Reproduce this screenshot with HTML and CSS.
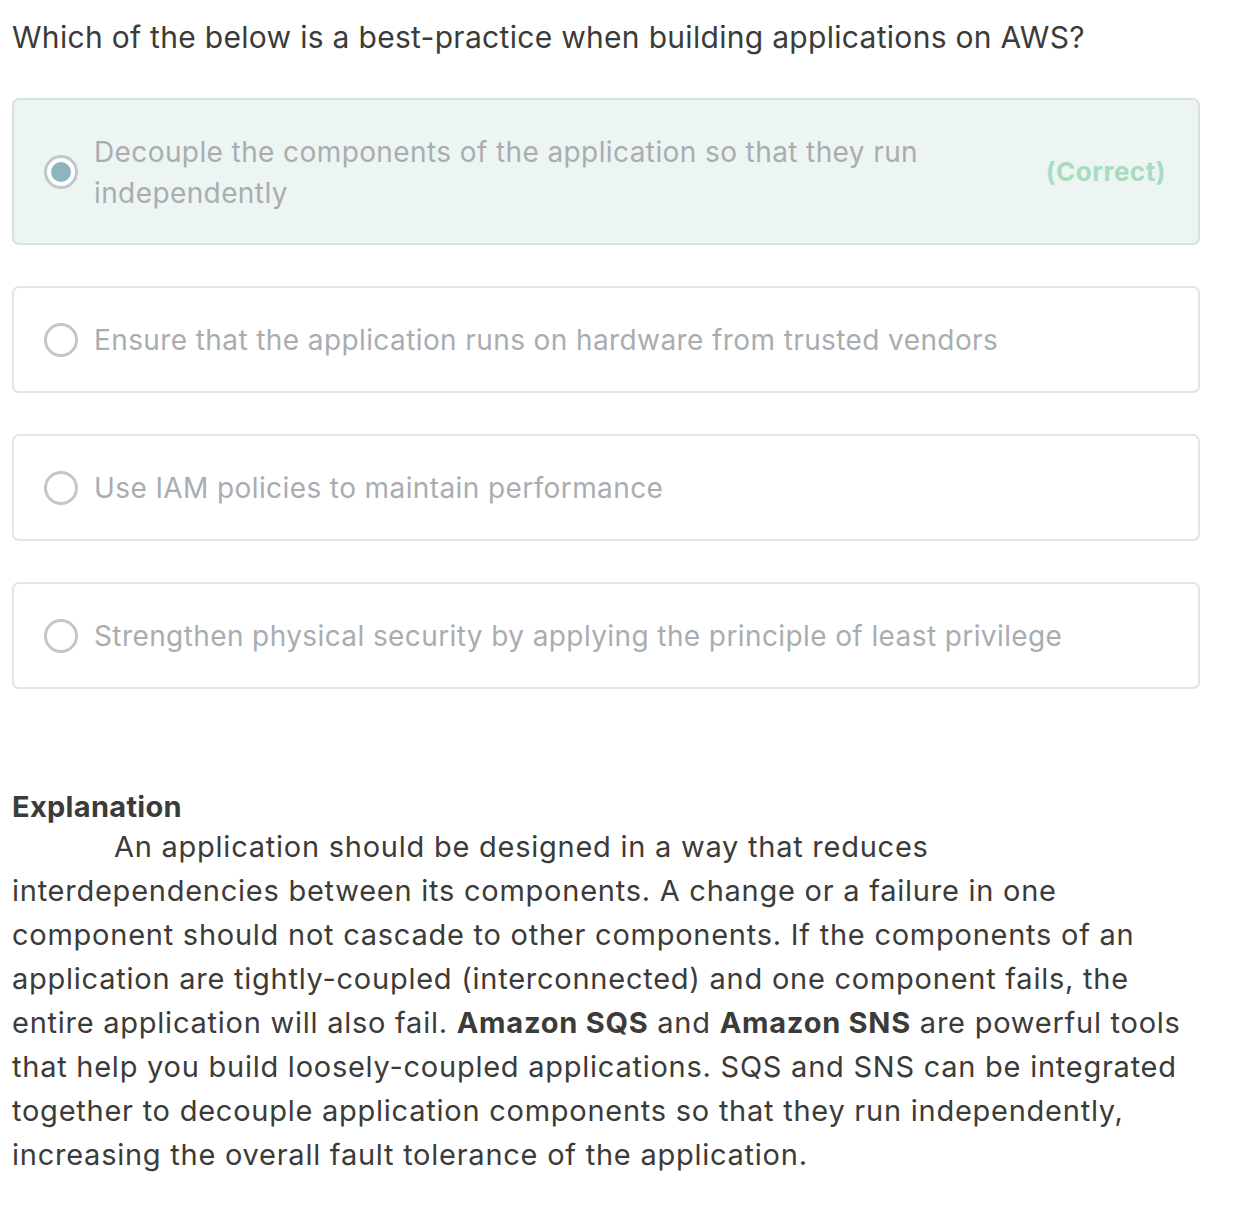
FILE: index.html
```html
<!DOCTYPE html>
<html>
<head>
<meta charset="utf-8">
<link rel="stylesheet" href="styles.css">
</head>
<body>
<div class="page">
  <div class="question">Which of the below is a best-practice when building applications on AWS?</div>
  <div class="options">
    <div class="option correct">
      <span class="radio checked"></span>
      <span class="label">Decouple the components of the application so that they run independently</span>
      <span class="tag">(Correct)</span>
    </div>
    <div class="option">
      <span class="radio"></span>
      <span class="label">Ensure that the application runs on hardware from trusted vendors</span>
    </div>
    <div class="option">
      <span class="radio"></span>
      <span class="label">Use IAM policies to maintain performance</span>
    </div>
    <div class="option">
      <span class="radio"></span>
      <span class="label">Strengthen physical security by applying the principle of least privilege</span>
    </div>
  </div>
  <div class="explanation">
    <div class="exp-title">Explanation</div>
    <p class="exp-body">An application should be designed in a way that reduces interdependencies between its components. A change or a failure in one component should not cascade to other components. If the components of an application are <span class="nb">tightly-coupled</span> (interconnected) and one component fails, the entire application will also fail. <b>Amazon SQS</b> and <b>Amazon SNS</b> are powerful tools that help you build <span class="nb">loosely-coupled</span> applications. SQS and SNS can be integrated together to decouple application components so that they run independently, increasing the overall fault tolerance of the application.</p>
  </div>
</div>
</body>
</html>
```

FILE: styles.css
```css
html, body {
  margin: 0;
  padding: 0;
  background: #ffffff;
}
body {
  font-family: Inter, "Noto Sans", sans-serif;
  color: #3b3b39;
}
.page {
  width: 1188px;
  padding: 16px 0 0 12px;
}
.question {
  font-size: 30px;
  line-height: 42px;
  letter-spacing: 0.3px;
  color: #3b3b39;
}
.options {
  display: flex;
  flex-direction: column;
  gap: 41px;
  margin-top: 40px;
}
.option {
  display: flex;
  align-items: center;
  border: 2px solid #e3e4e4;
  border-radius: 7px;
  box-sizing: border-box;
  min-height: 107px;
  padding: 20px 32px 20px 30px;
  background: #fff;
}
.option.correct {
  background: #ecf5f1;
  border-color: #d6e1dc;
  min-height: 147px;
}
.radio {
  flex: none;
  width: 34px;
  height: 34px;
  box-sizing: border-box;
  border: 3px solid #c3c7cb;
  border-radius: 50%;
  margin-right: 16px;
  position: relative;
}
.radio.checked {
  background: #fff;
}
.radio.checked::after {
  content: "";
  position: absolute;
  left: 4px;
  top: 4px;
  width: 20px;
  height: 20px;
  border-radius: 50%;
  background: #8db4bf;
}
.label {
  flex: 1;
  font-size: 28px;
  line-height: 41px;
  letter-spacing: 0.4px;
  color: #a9adb1;
  padding-right: 60px;
  margin-top: 2px;
}
.tag {
  flex: none;
  font-size: 26px;
  font-weight: 700;
  letter-spacing: 0.5px;
  color: #a8dcc1;
}
.explanation {
  margin-top: 100px;
}
.exp-title {
  font-size: 29px;
  font-weight: 700;
  line-height: 36px;
  letter-spacing: 0.3px;
  color: #3b3b39;
}
.exp-body {
  margin: 0;
  font-size: 29px;
  line-height: 44px;
  letter-spacing: 0.75px;
  text-indent: 102px;
  color: #3b3b39;
}
.exp-body b {
  font-weight: 700;
}
.nb {
  white-space: nowrap;
}
```
